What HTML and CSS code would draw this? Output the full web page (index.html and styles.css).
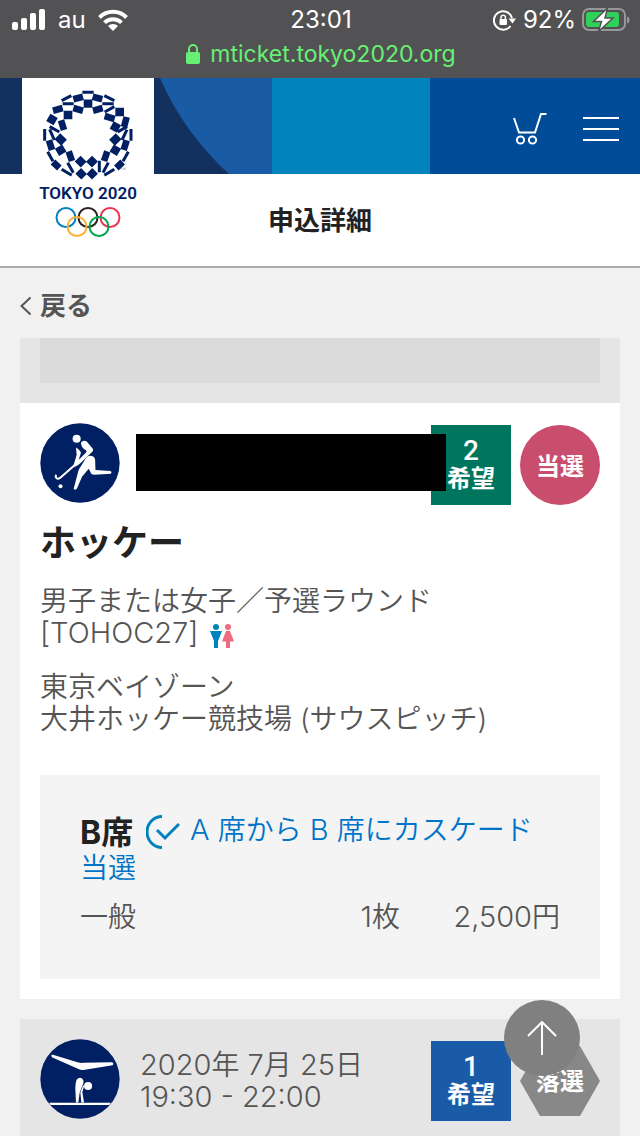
FILE: index.html
```html
<!DOCTYPE html>
<html lang="ja">
<head>
    <meta charset="UTF-8">
    <meta name="viewport" content="width=device-width, initial-scale=1.0">
    <title>申込詳細</title>
    <link rel="stylesheet" href="styles.css">
</head>
<body>
    <!-- ステータスバー -->
    <div class="status-bar">
        <div class="status-row">
            <div class="status-left">
                <svg width="34" height="22" viewBox="0 0 34 22" fill="#fff">
                    <rect x="0" y="13" width="6" height="8" rx="2"/>
                    <rect x="9" y="9" width="6" height="12" rx="2"/>
                    <rect x="18" y="4" width="6" height="17" rx="2"/>
                    <rect x="27" y="0" width="6" height="21" rx="2"/>
                </svg>
                <span>au</span>
                <svg width="30" height="22" viewBox="0 0 30 22" fill="none" stroke="#fff" stroke-width="4">
                    <path d="M1.5 8.5a19 19 0 0 1 27 0"/>
                    <path d="M6.5 13.7a12 12 0 0 1 17 0"/>
                    <path d="M15 22l-5-5a7 7 0 0 1 10 0z" fill="#fff" stroke="none"/>
                </svg>
            </div>
            <span>23:01</span>
            <div class="status-right">
                <svg width="24" height="22" viewBox="0 0 24 22" fill="none" stroke="#fff" stroke-width="2">
                    <path d="M17.5 17a9.200 9.200 0 1 1 1.500-8"/>
                    <path d="M15.500 9.500h7.500l-3.500 5z" fill="#fff" stroke="none"/>
                    <rect x="6.500" y="10" width="7.500" height="6" rx="1" fill="#fff" stroke="none"/>
                    <path d="M8 11V8.500a2.200 2.200 0 0 1 4.400 0V11" stroke-width="1.500"/>
                </svg>
                <span>92%</span>
                <svg width="48" height="24" viewBox="0 0 48 24">
                    <rect x="1" y="1" width="42" height="21" rx="6" fill="none" stroke="#98989b" stroke-width="2"/>
                    <rect x="4" y="4" width="33" height="15" rx="3" fill="#30d158"/>
                    <path d="M45 8.500c3.500 1 3.500 6 0 7z" fill="#98989b"/>
                    <path d="M25.500 0L11.500 13.500h8L16.500 23.500 31 10h-8z" fill="#fff" stroke="#525254" stroke-width="1.500"/>
                </svg>
            </div>
        </div>
        <div class="address">
            <svg width="14" height="20" viewBox="0 0 14 20">
                <rect x="0" y="8" width="14" height="12" rx="2" fill="#67f073"/>
                <path d="M3 9V5a4 4 0 0 1 8 0v4" fill="none" stroke="#67f073" stroke-width="2"/>
            </svg>
            <span>mticket.tokyo2020.org</span>
        </div>
    </div>

    <!-- ヘッダー -->
    <header class="header">
        <svg class="header-curve" viewBox="0 0 272 96">
            <path fill="#195ca5" d="M0 0h272v96H0z"/>
            <path fill="#13315f" d="M0 0h160Q184 55 229 96H0z"/>
        </svg>
        <div class="header-stripe"></div>
        <nav class="header-nav">
            <button class="icon-button" aria-label="カート">
                <svg width="34" height="34" viewBox="0 0 34 34" fill="none" stroke="#fff" stroke-width="2">
                    <path d="M1 6l5 14.500h16L28 2h5.500"/>
                    <circle cx="7.500" cy="28" r="3.600"/>
                    <circle cx="19.500" cy="28" r="3.600"/>
                </svg>
            </button>
            <button class="icon-button" aria-label="メニュー">
                <svg width="36" height="24" viewBox="0 0 36 24" stroke="#fff" stroke-width="2">
                    <path d="M0 1h36M0 12h36M0 23h36"/>
                </svg>
            </button>
        </nav>
        <a class="logo" href="#">
            <svg width="92" height="90" viewBox="126 42 276 270" fill="none" stroke="#002063">
                <path stroke-width="9" d="M247 49h34M185 74l29-15M313 59l30 15M188 83h33M307 83h34M314 108l29-16M149 152l29 16M381 152l-28 16M134 159v35M149 160l14 32M393 159v35M381 161l-15 31M143 227l16 29M385 227l-16 29M298 254v35M203 260l17 30M325 260l-16 30M185 280l30 18M343 280l-30 18"/>
                <path stroke-width="20" d="M220 70l29-8M278 62l29 8M159 104l29-8M220 96l29 8M279 104l29-8M314 120l30 9M380 123l-8 30M183 133l9 29M147 193l9 29M380 193l-9 29M206 226l10 29M322 226l-10 29M159 258l19 18M368 258l-19 18"/>
                <path stroke-width="25" d="M251 83h26M346 108h26M191 117h26M145 124l22 13M335 147l22 12M172 181l20 19M356 181l-20 19M171 229l22-13M335 216l22 13M233 248l18 18M285 248l-18 18M252 285l-17 17M268 285l17 17"/>
                <path stroke="#777" stroke-width="1" d="M362 275h6M365 275v7M370 282v-7l3 5 3-5v7"/>
            </svg>
            <span class="logo-text">TOKYO 2020</span>
            <svg width="66" height="30" viewBox="0 0 66 30" fill="none" stroke-width="2">
                <circle cx="11" cy="10.500" r="9.500" stroke="#0081c8"/>
                <circle cx="33" cy="10.500" r="9.500" stroke="#2b2220"/>
                <circle cx="55" cy="10.500" r="9.500" stroke="#ee334e"/>
                <circle cx="22" cy="19.500" r="9.500" stroke="#fcb131"/>
                <circle cx="44" cy="19.500" r="9.500" stroke="#00a651"/>
            </svg>
        </a>
    </header>

    <h1 class="page-title">申込詳細</h1>

    <main class="content">
        <a class="back" href="#">
            <svg width="12" height="20" viewBox="0 0 12 20" fill="none" stroke="#555" stroke-width="2">
                <path d="M10.500 1.500L1.500 10l9 8.500"/>
            </svg>
            戻る
        </a>

        <section class="card card-lost card-previous">
            <div class="previous-seat"></div>
        </section>

        <!-- 当選 -->
        <section class="card">
            <div class="card-head">
                <svg class="sport" viewBox="121 430 238 238">
                    <circle cx="240" cy="549" r="118" fill="#002063"/>
                    <g fill="#fff">
                        <circle cx="230" cy="477" r="12"/>
                        <circle cx="182" cy="618" r="6"/>
                        <path d="M243 488q7-9 17-3l17 20q5 6-2 12l-33 32q-6 6-14 10-10 5-7-4l9-30-2-22q9 4 15 15l-7 22 22-22q4-5-1-8-14-6-14-22z"/>
                        <path d="M258 534q6-8 17-6 9 2 10 12l1 30 44 3q6 2 2 8l-50 3q-9 0-11-8l-5-10-20 24-15 35q-4 6-10 1l14-53q4-10 10-18z"/>
                    </g>
                    <path fill="none" stroke="#fff" stroke-width="6" d="M260 524l-76 67q-9 8-14 3-4-4-1-10"/>
                </svg>
                <div class="masked"></div>
                <div class="badge badge-second"><span class="badge-number">2</span>希望</div>
                <div class="badge badge-won">当選</div>
            </div>
            <h2 class="sport-name">ホッケー</h2>
            <p class="detail">男子または女子／予選ラウンド<br><span class="latin">[TOHOC27]</span>
                <svg class="gender" width="24" height="24" viewBox="0 0 24 24">
                    <g fill="#0083bd"><circle cx="6" cy="3" r="3"/><path d="M0 7h12L8 17v7H4v-7z"/></g>
                    <g fill="#ee6b80"><circle cx="18" cy="3" r="3"/><path d="M16 7h4l4 10.500h-4V24h-4v-6.500h-4z"/></g>
                </svg>
            </p>
            <p class="detail">東京ベイゾーン<br>大井ホッケー競技場 (サウスピッチ)</p>
            <div class="seat">
                <p class="seat-result">
                    <strong>B席</strong>
                    <svg class="check" width="34" height="34" viewBox="0 0 34 34" fill="none" stroke="#0083bd" stroke-width="3">
                        <path d="M16 1.500a15 15.500 0 0 0 0 31"/>
                        <path d="M11 15l8 8L33 9"/>
                    </svg>
                    <span class="latin">A </span>席から<span class="latin"> B </span>席にカスケード<span class="keep">当選</span>
                </p>
                <table class="price">
                    <tr>
                        <td>一般</td>
                        <td><span class="latin">1</span>枚</td>
                        <td><span class="latin">2,500</span>円</td>
                    </tr>
                </table>
            </div>
        </section>

        <!-- 落選 -->
        <section class="card card-lost">
            <div class="card-head">
                <svg class="sport" viewBox="61 118 238 238">
                    <circle cx="180" cy="237" r="118" fill="#002063"/>
                    <g fill="#fff">
                        <path d="M97 164l78 24q7 2 15 1l85-2q7 3 2 9l-87 14q-6 1-11-1l-81-36q-6-4-1-9z"/>
                        <circle cx="204" cy="258" r="12"/>
                        <path d="M170 239q8-9 17-3 5 5 3 14l-11 28-4 29h-7l-2-44q0-15 4-24z"/>
                        <path d="M190 254l2 5-5 17 5 31h-8l-3-30z"/>
                        <path d="M88 308h184l-5 6H93z"/>
                    </g>
                </svg>
                <p class="date"><span class="latin">2020</span>年<span class="latin"> 7</span>月<span class="latin"> 25</span>日<br><span class="latin">19:30 - 22:00</span></p>
                <div class="badge badge-first"><span class="badge-number">1</span>希望</div>
                <div class="badge badge-lost">落選</div>
            </div>
        </section>
    </main>

    <button class="to-top" aria-label="ページの先頭へ">
        <svg width="30" height="34" viewBox="0 0 30 34" fill="none" stroke="#fff" stroke-width="2">
            <path d="M15 34V1M1 15L15 1l14 14"/>
        </svg>
    </button>
</body>
</html>
```
FILE: styles.css
```css
* {
    box-sizing: border-box;
}
body {
    display: flex;
    flex-direction: column;
    min-height: 100vh;
    margin: 0;
    background: #f1f1f1;
    color: #555;
    font-family: Inter, "Noto Sans CJK JP", sans-serif;
    font-size: 28px;
    font-weight: 350;
    line-height: 32px;
}
h1, h2, p {
    margin: 0;
}
button {
    padding: 0;
    border: none;
    background: none;
    cursor: pointer;
}
svg {
    display: block;
    flex-shrink: 0;
}
/* 英数字は和文より少し大きく */
.latin {
    font-size: 29px;
    line-height: 30px;
}

/* ステータスバー */
.status-bar {
    height: 78px;
    padding: 4px 10px 0 12px;
    background: #525254;
    color: #fff;
    font-size: 24px;
    font-weight: 400;
}
.status-row {
    display: grid;
    grid-template-columns: 1fr auto 1fr;
    align-items: center;
}
.status-left,
.status-right {
    display: flex;
    align-items: center;
    gap: 12px;
}
.status-right {
    justify-content: flex-end;
    gap: 6px;
}
.address {
    display: flex;
    align-items: center;
    justify-content: center;
    gap: 10px;
    padding-top: 2px;
    color: #67f073;
    font-size: 23px;
}

/* ヘッダー */
.header {
    position: relative;
    display: flex;
    height: 96px;
    background: #004c98;
}
.header-curve {
    width: 272px;
    height: 96px;
}
.header-stripe {
    width: 158px;
    background: #0083bd;
}
.header-nav {
    display: flex;
    flex: 1;
    align-items: center;
    justify-content: flex-end;
    gap: 36px;
    padding: 6px 21px 0 0;
}
.logo {
    position: absolute;
    top: 0;
    left: 22px;
    display: flex;
    flex-direction: column;
    align-items: center;
    width: 132px;
    padding: 12px 0 8px;
    background: #fff;
    color: #002063;
    text-decoration: none;
}
.logo-text {
    font-family: Roboto, sans-serif;
    font-size: 17px;
    font-weight: 600;
    line-height: 27px;
}
.page-title {
    padding: 31px 0 29px;
    border-bottom: 2px solid #aaa;
    background: #fff;
    color: #222;
    font-size: 26px;
    font-weight: 700;
    text-align: center;
}

.content {
    flex: 1;
    padding: 0 20px;
}
.back {
    display: flex;
    align-items: center;
    gap: 8px;
    height: 70px;
    padding-top: 6px;
    color: #555;
    font-size: 26px;
    font-weight: 600;
    text-decoration: none;
}

/* 申込カード */
.card {
    margin-bottom: 20px;
    padding: 20px;
    background: #fff;
}
.card-lost {
    margin-bottom: 0;
    padding-bottom: 16px;
    background: #e5e5e5;
}
.card-previous {
    padding: 0 20px 20px;
}
.previous-seat {
    height: 45px;
    background: #dbdbdb;
}
.card-head {
    display: flex;
    align-items: center;
}
.sport {
    width: 80px;
    height: 80px;
    margin-bottom: 2px;
}
.masked {
    position: relative;
    flex: 1;
    height: 57px;
    margin: 0 -15px 4px 16px;
    background: #000;
}
.date {
    flex: 1;
    padding: 2px 0 0 20px;
}
.badge {
    display: flex;
    flex-direction: column;
    align-items: center;
    justify-content: center;
    width: 80px;
    height: 80px;
    margin: 2px 0 0 9px;
    color: #fff;
    font-size: 24px;
    font-weight: 700;
    line-height: 28px;
}
.badge-number {
    font-family: Roboto, sans-serif;
    font-size: 28px;
    font-weight: 500;
}
.badge-second {
    margin-left: 0;
    background: #00755d;
}
.badge-first {
    margin-left: 0;
    background: #1a5ba7;
}
.badge-won {
    padding-top: 4px;
    border-radius: 50%;
    background: #c94e6e;
}
.badge-lost {
    height: 70px;
    padding-top: 2px;
    background: #888;
    clip-path: polygon(25% 0, 75% 0, 100% 50%, 75% 100%, 25% 100%, 0 50%);
}
.sport-name {
    margin: 14px 0 18px;
    color: #222;
    font-size: 36px;
    font-weight: 700;
    line-height: 48px;
}
.detail {
    margin-bottom: 22px;
}
.gender {
    display: inline-block;
    margin-left: 4px;
    vertical-align: -5px;
}

/* 席種 */
.seat {
    margin-top: 40px;
    padding: 36px 40px 46px;
    background: #f4f4f4;
}
.seat-result {
    color: #0074c8;
    line-height: 38px;
}
.seat-result strong {
    color: #222;
    font-size: 32px;
    font-weight: 700;
    line-height: 30px;
    vertical-align: -4px;
}
.check {
    display: inline-block;
    margin: 0 2px 0 5px;
    vertical-align: -9px;
}
.keep {
    display: inline-block;
}
.price {
    width: 100%;
    margin-top: 14px;
    border-collapse: collapse;
    table-layout: fixed;
}
.price td {
    padding: 0;
}
.price td + td {
    text-align: right;
}

.to-top {
    position: fixed;
    right: 60px;
    bottom: 60px;
    display: flex;
    align-items: center;
    justify-content: center;
    width: 76px;
    height: 76px;
    border-radius: 50%;
    background: #808080;
}
```
